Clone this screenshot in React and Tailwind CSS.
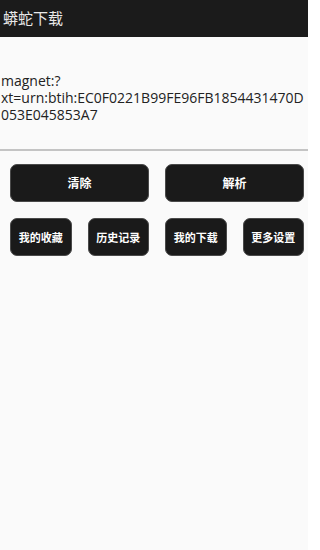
export default function App() {
  const cjk = { fontFamily: '"Noto Sans CJK SC", "Noto Sans", sans-serif' };
  const btn =
    "flex items-center justify-center rounded-[7px] bg-[#1a1a1a] border border-[#4a4a4a] text-white font-bold";
  return (
    <div className="w-[308px] h-[550px] bg-[#fafafa] flex flex-col overflow-hidden">
      <div
        className="h-[37px] bg-[#1b1b1b] flex items-center pl-[3px] text-[15px] text-[#e8e8e8] shrink-0"
        style={cjk}
      >
        蟒蛇下载
      </div>
      <div
        className="pt-[35px] pb-[26px] pl-[1px] border-b-2 border-[#c4c4c4] text-[14px] leading-[17px] text-[#222] whitespace-nowrap overflow-hidden"
        style={{ fontFamily: '"Open Sans", "Noto Sans", sans-serif' }}
      >
        <div>magnet:?</div>
        <div>xt=urn:btih:EC0F0221B99FE96FB1854431470D</div>
        <div>053E045853A7</div>
      </div>
      <div className="pt-[13px] pl-[10px] pr-[4px] flex flex-col gap-[16px]" style={cjk}>
        <div className="grid grid-cols-2 gap-[16px]">
          <div className={`${btn} h-[38px] text-[12px]`}>清除</div>
          <div className={`${btn} h-[38px] text-[12px]`}>解析</div>
        </div>
        <div className="grid grid-cols-4 gap-[16px]">
          <div className={`${btn} h-[38px] text-[11px]`}>我的收藏</div>
          <div className={`${btn} h-[38px] text-[11px]`}>历史记录</div>
          <div className={`${btn} h-[38px] text-[11px]`}>我的下载</div>
          <div className={`${btn} h-[38px] text-[11px]`}>更多设置</div>
        </div>
      </div>
    </div>
  );
}
